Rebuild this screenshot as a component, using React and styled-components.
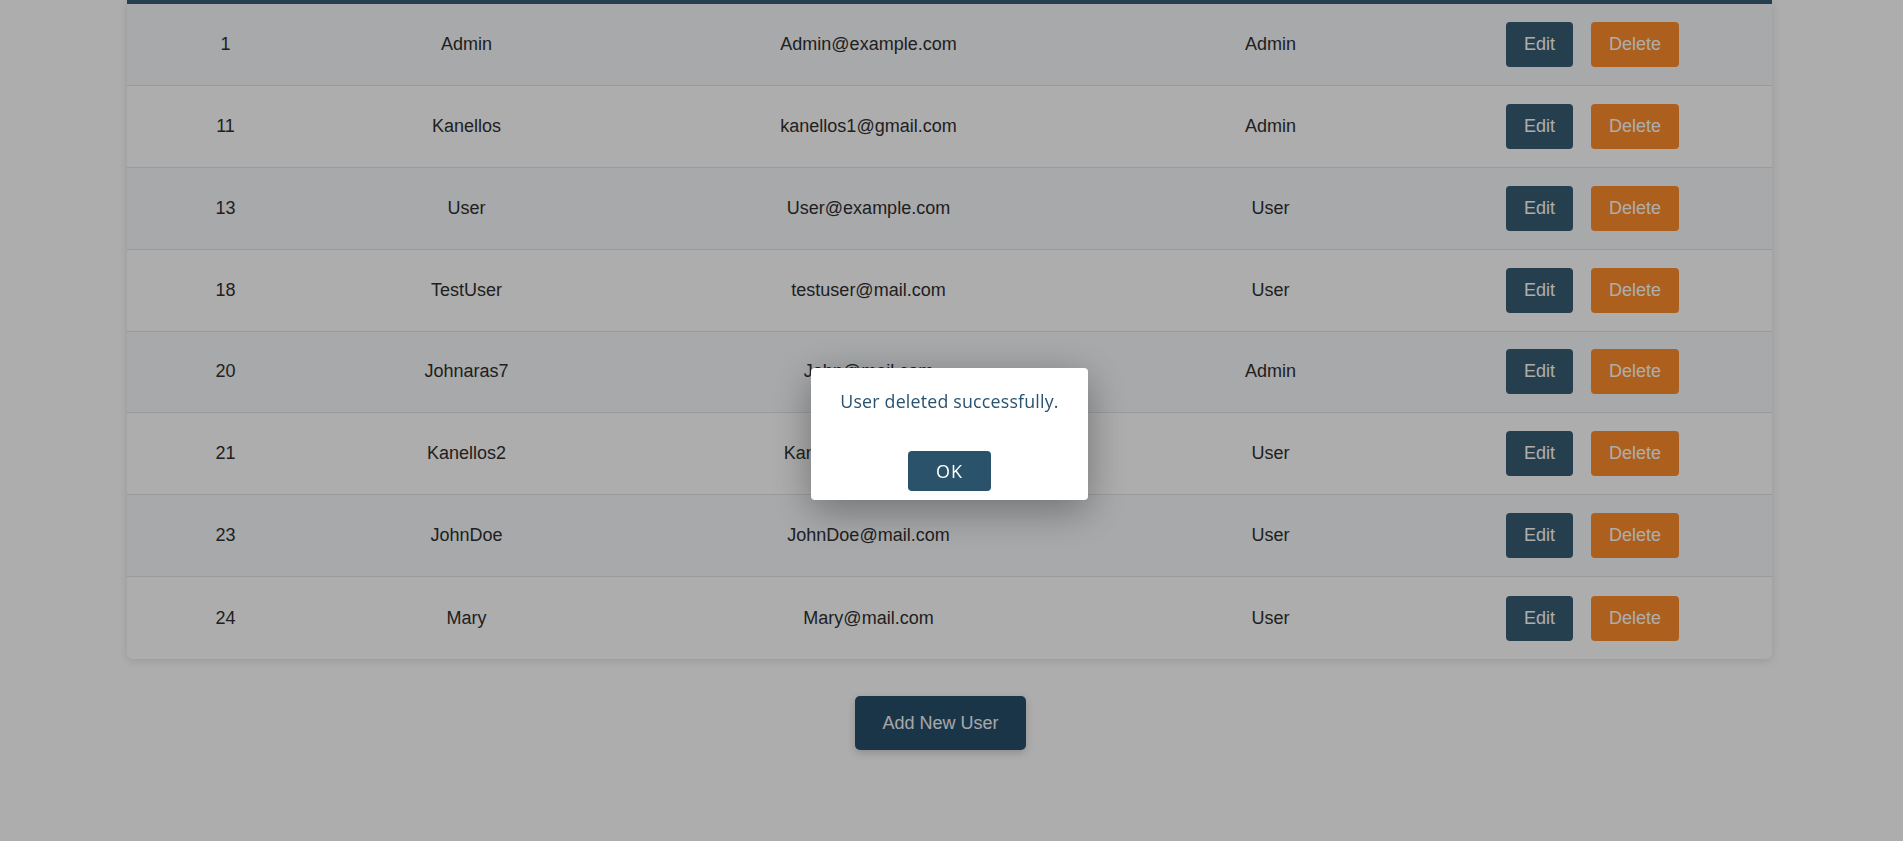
import React from "react";
import styled, { createGlobalStyle } from "styled-components";

const GlobalStyle = createGlobalStyle`
  html, body {
    margin: 0;
    padding: 0;
    background: #ffffff;
    font-family: "Liberation Sans", Arial, sans-serif;
    overflow: hidden;
  }
`;

const Page = styled.div`
  min-height: 841px;
  padding: 0 131px 0 127px;
  box-sizing: border-box;
`;

const Table = styled.div`
  border-top: 4px solid #385d73;
  border-radius: 0 0 6px 6px;
  background: #ffffff;
  box-shadow: 0 2px 8px rgba(0, 0, 0, 0.12);
  overflow: hidden;
`;

const Row = styled.div`
  display: grid;
  grid-template-columns: 197fr 285fr 519fr 285fr 359fr;
  align-items: center;
  height: 81.875px;
  box-sizing: border-box;
  background: ${(p) => (p.$odd ? "#f7f9fc" : "#ffffff")};
  border-bottom: ${(p) => (p.$last ? "none" : "1px solid #e2e4e8")};
`;

const Cell = styled.div`
  text-align: center;
  font-size: 18px;
  color: #303030;
`;

const Actions = styled.div`
  display: flex;
  justify-content: center;
  gap: 18px;
`;

const ActionButton = styled.button`
  font-family: "Liberation Sans", Arial, sans-serif;
  font-size: 18px;
  line-height: 21px;
  padding: 12px 18px;
  border: none;
  border-radius: 4px;
  color: #ffffff;
  background: ${(p) => (p.$danger ? "#ff8c2b" : "#385d73")};
  cursor: pointer;
`;

const Footer = styled.div`
  display: flex;
  justify-content: center;
  padding: 37px 0 0;
  margin-left: -18px;
`;

const AddButton = styled.button`
  font-family: "Liberation Sans", Arial, sans-serif;
  font-size: 18px;
  line-height: 22px;
  padding: 16px 27px;
  border: none;
  border-radius: 5px;
  color: #f4f6f8;
  background: #284f6b;
  box-shadow: 0 3px 8px rgba(0, 0, 0, 0.18);
  cursor: pointer;
`;

const Overlay = styled.div`
  position: fixed;
  inset: 0;
  background: rgba(0, 0, 0, 0.32);
  display: flex;
  align-items: center;
  justify-content: center;
  padding: 26px 4px 0 0;
  box-sizing: border-box;
`;

const Modal = styled.div`
  width: 277px;
  box-sizing: border-box;
  background: #ffffff;
  border-radius: 4px;
  padding: 21px 8px 9px;
  text-align: center;
  box-shadow: 0 10px 40px rgba(0, 0, 0, 0.35);
`;

const Message = styled.p`
  margin: 0 0 37px;
  font-family: "Open Sans", "Noto Sans", sans-serif;
  font-size: 17.8px;
  line-height: 25px;
  color: #285270;
  letter-spacing: 0.2px;
`;

const OkButton = styled.button`
  width: 83px;
  height: 40px;
  border: none;
  border-radius: 4px;
  background: #2a526a;
  color: #ffffff;
  font-family: "Open Sans", "Noto Sans", sans-serif;
  font-size: 18px;
  font-weight: 500;
  letter-spacing: 1px;
  cursor: pointer;
`;

const users = [
  { id: 1, name: "Admin", email: "Admin@example.com", role: "Admin" },
  { id: 11, name: "Kanellos", email: "kanellos1@gmail.com", role: "Admin" },
  { id: 13, name: "User", email: "User@example.com", role: "User" },
  { id: 18, name: "TestUser", email: "testuser@mail.com", role: "User" },
  { id: 20, name: "Johnaras7", email: "John@mail.com", role: "Admin" },
  { id: 21, name: "Kanellos2", email: "Kanellos2@mail.com", role: "User" },
  { id: 23, name: "JohnDoe", email: "JohnDoe@mail.com", role: "User" },
  { id: 24, name: "Mary", email: "Mary@mail.com", role: "User" },
];

const App = () => {
  return (
    <>
      <GlobalStyle />
      <Page>
        <Table>
          {users.map((u, i) => (
            <Row key={u.id} $odd={i % 2 === 0} $last={i === users.length - 1}>
              <Cell>{u.id}</Cell>
              <Cell>{u.name}</Cell>
              <Cell>{u.email}</Cell>
              <Cell>{u.role}</Cell>
              <Actions>
                <ActionButton>Edit</ActionButton>
                <ActionButton $danger>Delete</ActionButton>
              </Actions>
            </Row>
          ))}
        </Table>
        <Footer>
          <AddButton>Add New User</AddButton>
        </Footer>
      </Page>
      <Overlay>
        <Modal>
          <Message>User deleted successfully.</Message>
          <OkButton>OK</OkButton>
        </Modal>
      </Overlay>
    </>
  );
};

export default App;
